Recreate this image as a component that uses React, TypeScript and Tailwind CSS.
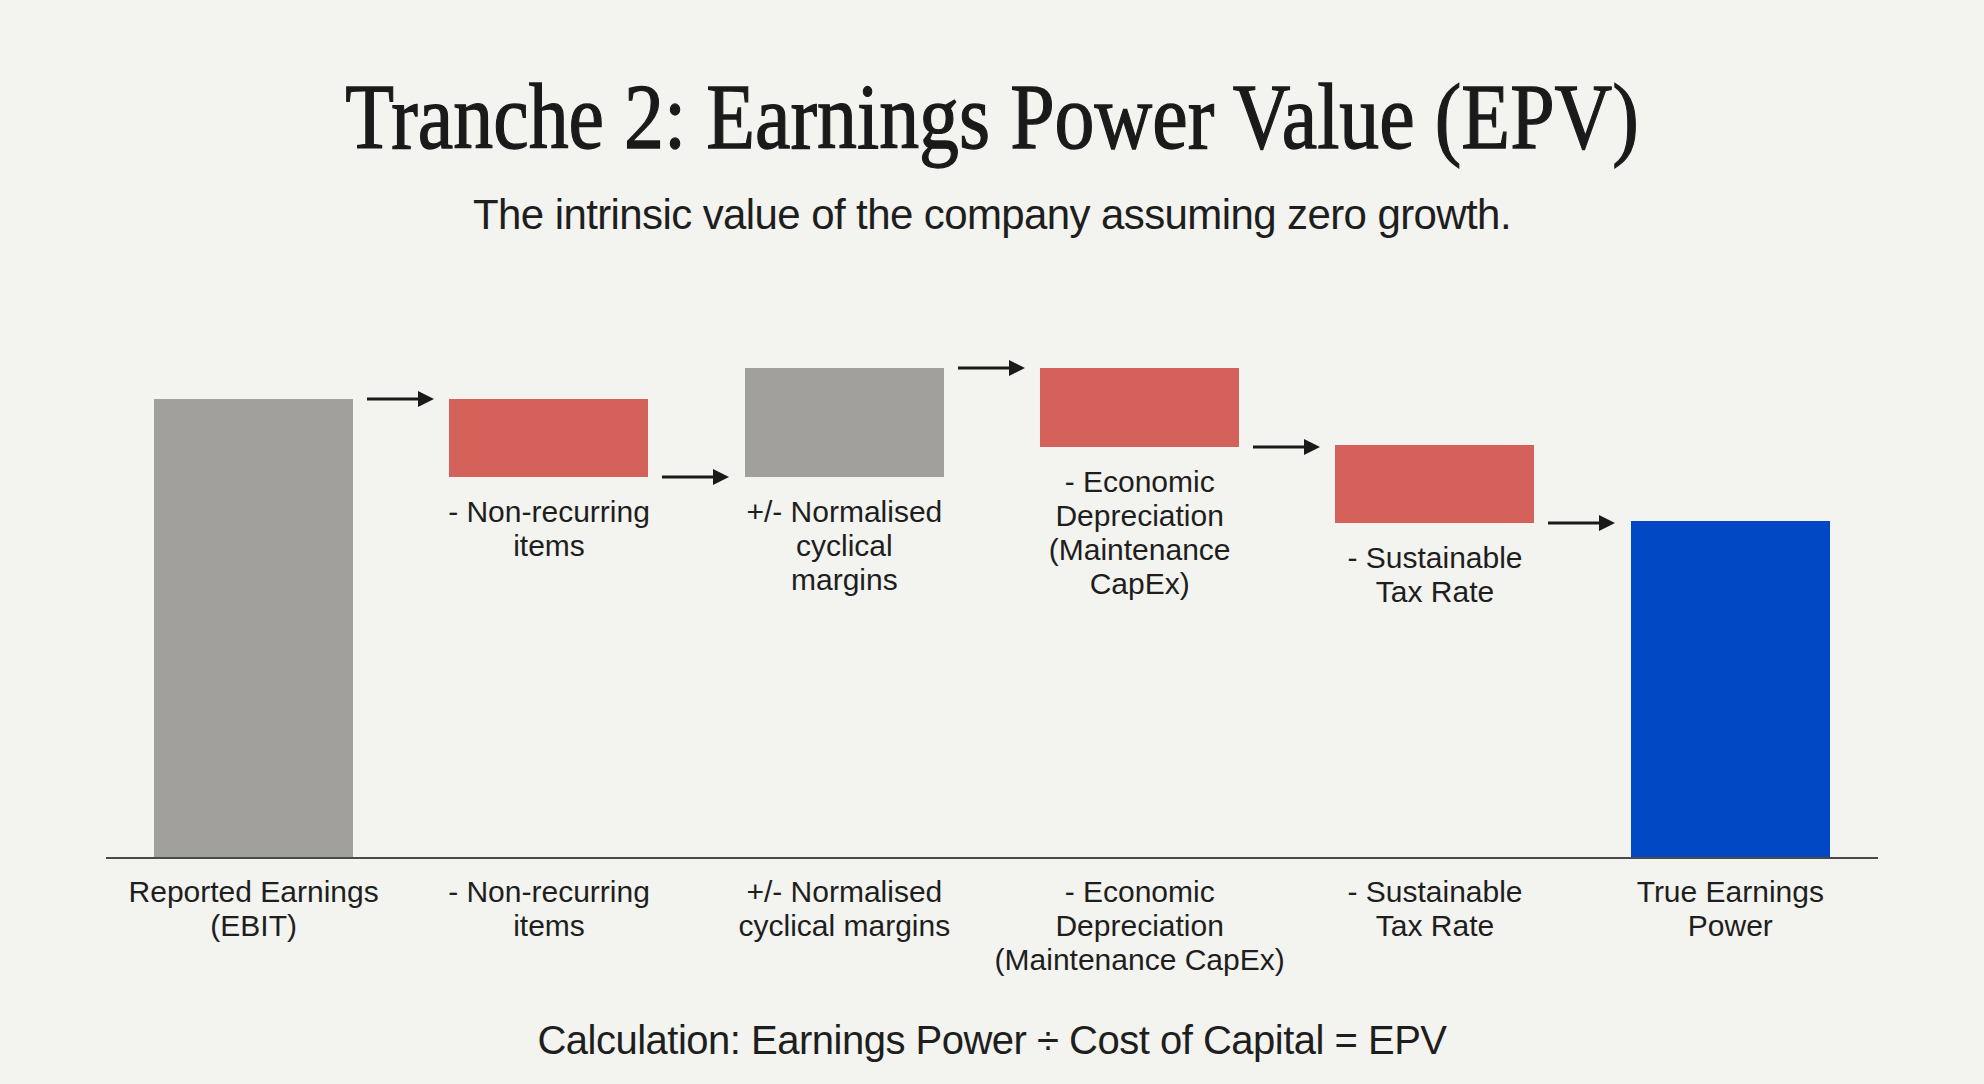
import React from "react";

type Step = {
	id: string;
	offset: number; // distance from plot top to bar top
	height: number;
	color: string;
	label?: string[];
	bottom: string[];
	arrow?: "top" | "bottom";
};

const steps: Step[] = [
	{ id: "ebit", offset: 31, height: 458, color: "bg-[#a1a09c]", bottom: ["Reported Earnings", "(EBIT)"], arrow: "top" },
	{ id: "nonrec", offset: 31, height: 78, color: "bg-[#d5625a]", label: ["- Non-recurring", "items"], bottom: ["- Non-recurring", "items"], arrow: "bottom" },
	{ id: "cyclical", offset: 0, height: 109, color: "bg-[#a1a09c]", label: ["+/- Normalised", "cyclical", "margins"], bottom: ["+/- Normalised", "cyclical margins"], arrow: "top" },
	{ id: "depr", offset: 0, height: 79, color: "bg-[#d5625a]", label: ["- Economic", "Depreciation", "(Maintenance", "CapEx)"], bottom: ["- Economic", "Depreciation", "(Maintenance CapEx)"], arrow: "bottom" },
	{ id: "tax", offset: 77, height: 78, color: "bg-[#d5625a]", label: ["- Sustainable", "Tax Rate"], bottom: ["- Sustainable", "Tax Rate"], arrow: "bottom" },
	{ id: "true", offset: 153, height: 336, color: "bg-[#0048c4]", bottom: ["True Earnings", "Power"] },
];

const Arrow = ({ at }: { at: "top" | "bottom" }) => (
	<svg
		width="67"
		height="18"
		viewBox="0 0 67 18"
		className={`absolute left-[calc(100%+14px)] ${at === "top" ? "top-[-9px]" : "bottom-[-9px]"}`}
	>
		<line x1="0" y1="9" x2="54" y2="9" stroke="#1a1a1a" strokeWidth="3" />
		<polygon points="51,1 67,9 51,17" fill="#1a1a1a" />
	</svg>
);

export default function App() {
	return (
		<div className="w-full h-[1084px] bg-[#f3f3ef] text-[#1e1e1e] flex flex-col items-center font-['Liberation_Sans',Arial,sans-serif] overflow-hidden">
			{/* Heading */}
			<h1 className="mt-[69px] text-[94px] leading-[94px] font-['Liberation_Serif','Times_New_Roman',serif] scale-x-[0.85] whitespace-nowrap text-[#1a1a1a] [-webkit-text-stroke:1.3px_#1a1a1a]">
				Tranche 2: Earnings Power Value (EPV)
			</h1>
			<p className="mt-[27px] text-[42px] leading-[50px] tracking-[-0.6px] whitespace-nowrap">
				The intrinsic value of the company assuming zero growth.
			</p>

			{/* Waterfall chart */}
			<div className="mt-[128px] w-[1772px]">
				<div className="grid grid-cols-6 h-[491px] border-b-2 border-[#4a4a4a]">
					{steps.map((s) => (
						<div key={s.id} className="flex flex-col items-center">
							<div
								className={`relative w-[199px] shrink-0 ${s.color}`}
								style={{ marginTop: s.offset, height: s.height }}
							>
								{s.arrow && <Arrow at={s.arrow} />}
							</div>
							{s.label && (
								<div className="mt-[18px] text-center text-[30px] leading-[34px] whitespace-nowrap">
									{s.label.map((l) => (
										<div key={l}>{l}</div>
									))}
								</div>
							)}
						</div>
					))}
				</div>
				<div className="grid grid-cols-6 pt-[16px]">
					{steps.map((s) => (
						<div key={s.id} className="text-center text-[30px] leading-[34px] whitespace-nowrap">
							{s.bottom.map((l) => (
								<div key={l}>{l}</div>
							))}
						</div>
					))}
				</div>
			</div>

			<p className="mt-[39px] text-[40px] leading-[48px] tracking-[-0.5px] whitespace-nowrap">
				Calculation: Earnings Power ÷ Cost of Capital = EPV
			</p>
		</div>
	);
}
